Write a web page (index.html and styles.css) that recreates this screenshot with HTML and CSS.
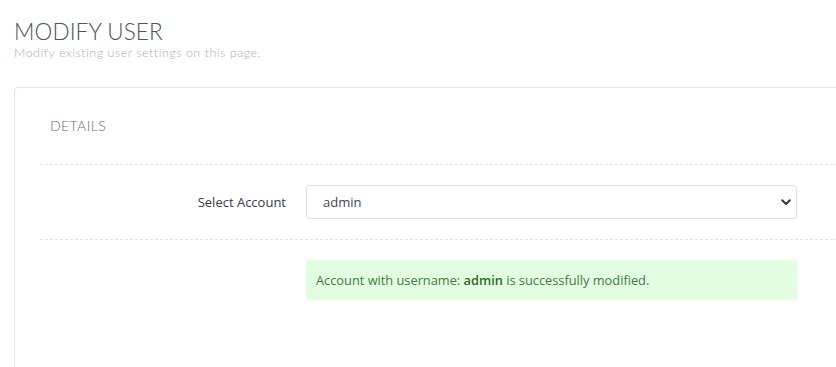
FILE: index.html
```html
<!DOCTYPE html>
<html>
<head>
<meta charset="utf-8">
<link rel="stylesheet" href="styles.css">
</head>
<body>
<div class="page">
  <div class="page-head">
    <h1 class="title">MODIFY USER</h1>
    <p class="subtitle">Modify existing user settings on this page.</p>
  </div>
  <div class="card">
    <div class="card-head">DETAILS</div>
    <div class="card-body">
      <div class="form-row">
        <label class="label" for="acct">Select Account</label>
        <div class="select-wrap">
          <select id="acct" class="select"><option>admin</option></select>
          <svg class="chev" width="10" height="7" viewBox="0 0 10 7"><path d="M1.2 1.2 L5 5 L8.8 1.2" fill="none" stroke="#343a40" stroke-width="2" stroke-linecap="round" stroke-linejoin="round"/></svg>
        </div>
      </div>
      <div class="alert-row">
        <div class="spacer"></div>
        <div class="alert"><span>Account with username: <b>admin</b> is successfully modified.</span></div>
      </div>
    </div>
  </div>
</div>
</body>
</html>
```
FILE: styles.css
```css
html, body {
  margin: 0;
  padding: 0;
  background: #fff;
  overflow: hidden;
  height: 367px;
}
.page {
  width: 880px;
  padding: 0 0 0 14px;
  font-family: "Open Sans", "Noto Sans", sans-serif;
}
.page-head {
  padding-top: 18px;
}
.title {
  margin: 0;
  font-family: Lato, "Open Sans", sans-serif;
  font-weight: 300;
  font-size: 22.5px;
  line-height: 28px;
  color: #4b5458;
  letter-spacing: 0.1px;
}
.subtitle {
  margin: 0;
  font-family: Lato, "Open Sans", sans-serif;
  font-weight: 300;
  font-size: 12.5px;
  line-height: 14px;
  color: #a9adb0;
  letter-spacing: 0.5px;
}
.card {
  margin-top: 27px;
  border: 1px solid #dfe6ed;
  border-radius: 4px 0 0 0;
  height: 290px;
  padding: 0 0 0 25px;
}
.card-head {
  padding: 28px 0 0 10px;
  height: 48px;
  font-family: Lato, "Open Sans", sans-serif;
  font-weight: 300;
  font-size: 14px;
  line-height: 20px;
  color: #627373;
  letter-spacing: 0.4px;
  border-bottom: 1px dashed #e0e4e8;
}
.form-row {
  display: flex;
  align-items: center;
  padding: 20px 0;
  border-bottom: 1px dashed #e0e4e8;
}
.label {
  width: 246px;
  text-align: right;
  font-size: 13px;
  color: #343d48;
  margin-right: 20px;
}
.select-wrap {
  position: relative;
  width: 491px;
}
.select {
  display: block;
  width: 100%;
  height: 34px;
  -webkit-appearance: none;
  appearance: none;
  border: 1px solid #dbe2ec;
  border-radius: 3px;
  background: #fff;
  padding: 0 0 0 16px;
  font-family: "Open Sans", "Noto Sans", sans-serif;
  font-size: 13px;
  color: #3d4650;
  outline: none;
}
.chev {
  position: absolute;
  right: 6px;
  top: 14px;
  pointer-events: none;
}
.alert-row {
  display: flex;
  padding-top: 20px;
}
.spacer {
  width: 266px;
}
.alert {
  width: 491px;
  height: 40px;
  box-sizing: border-box;
  padding: 0 10px;
  display: flex;
  align-items: center;
  background: #e2fde2;
  border-radius: 3px;
  color: #3e7b3e;
  font-size: 12.8px;
}
.alert b {
  font-weight: 600;
  color: #2d6a2d;
}
```
